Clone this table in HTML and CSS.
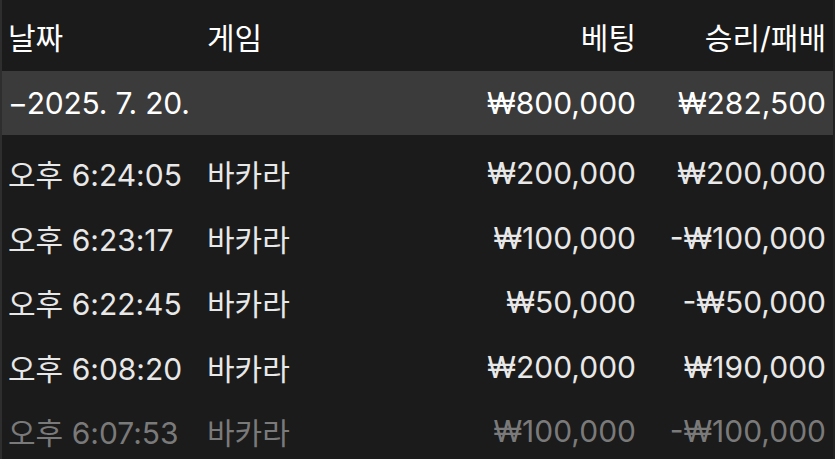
FILE: index.html
```html
<!DOCTYPE html>
<html lang="ko">
<head>
    <meta charset="UTF-8">
    <meta name="viewport" content="width=device-width, initial-scale=1.0">
    <title>베팅 내역</title>
    <link rel="stylesheet" href="styles.css">
</head>
<body>
    <div class="history">
        <div class="row head">
            <div>날짜</div>
            <div>게임</div>
            <div class="num">베팅</div>
            <div class="num">승리/패배</div>
        </div>

        <div class="row group">
            <div class="date">−2025. 7. 20.</div>
            <div></div>
            <div class="num">₩800,000</div>
            <div class="num">₩282,500</div>
        </div>

        <div class="rows">
            <div class="row">
                <div>오후 6:24:05</div>
                <div>바카라</div>
                <div class="num">₩200,000</div>
                <div class="num">₩200,000</div>
            </div>
            <div class="row">
                <div>오후 6:23:17</div>
                <div>바카라</div>
                <div class="num">₩100,000</div>
                <div class="num">-₩100,000</div>
            </div>
            <div class="row">
                <div>오후 6:22:45</div>
                <div>바카라</div>
                <div class="num">₩50,000</div>
                <div class="num">-₩50,000</div>
            </div>
            <div class="row">
                <div>오후 6:08:20</div>
                <div>바카라</div>
                <div class="num">₩200,000</div>
                <div class="num">₩190,000</div>
            </div>
            <div class="row faded">
                <div>오후 6:07:53</div>
                <div>바카라</div>
                <div class="num">₩100,000</div>
                <div class="num">-₩100,000</div>
            </div>
        </div>
    </div>
</body>
</html>
```

FILE: styles.css
```css
html, body {
    margin: 0;
    padding: 0;
    height: 100%;
    overflow: hidden;
}

body {
    font-family: Inter, "Noto Sans CJK KR", sans-serif;
    background: #1b1b1b;
    color: #e8e8e8;
    font-size: 30px;
}

.history {
    border-left: 2px solid #2e2e2e;
    border-right: 2px solid #222;
    min-height: 100%;
    box-sizing: border-box;
}

.row {
    display: grid;
    grid-template-columns: 199px 1fr 200px 190px;
    align-items: center;
    padding: 0 7px 0 6px;
    height: 64.5px;
    white-space: nowrap;
}

.num {
    text-align: right;
}

.head {
    height: 71px;
    color: #fff;
}

.group {
    height: 64px;
    background: #3b3b3b;
    color: #fff;
}

.date {
    letter-spacing: -0.2px;
}

.rows {
    padding-top: 6px;
}

.faded {
    color: #7a7a7a;
}
```
